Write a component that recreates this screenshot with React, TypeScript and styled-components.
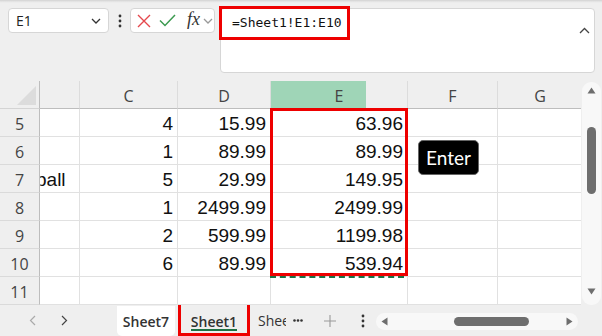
import React from 'react';
import styled, { createGlobalStyle } from 'styled-components';

const GlobalStyle = createGlobalStyle`
  html, body {
    margin: 0;
    padding: 0;
    background: #efefef;
  }
  #root {
    width: 602px;
    height: 336px;
    overflow: hidden;
  }
`;

const Window = styled.div`
  width: 602px;
  height: 336px;
  display: flex;
  flex-direction: column;
  background: #efefef;
  font-family: "Open Sans", "Noto Sans", sans-serif;
  overflow: hidden;
`;

const Toolbar = styled.div`
  height: 81px;
  box-sizing: border-box;
  display: flex;
  align-items: flex-start;
  padding: 8px 7px 0 8px;
  background: linear-gradient(#d2d2d2 0, #dedede 1px, #e9e9e9 2px, #efefef 3px);
`;

const NameBox = styled.div`
  width: 101px;
  height: 25px;
  box-sizing: border-box;
  display: flex;
  align-items: center;
  justify-content: space-between;
  padding: 0 7px 0 7px;
  background: #fff;
  border: 1px solid #d6d6d6;
  border-radius: 4px;
  font-size: 14px;
  color: #222;
`;

const Kebab = styled.div`
  width: 21px;
  height: 25px;
  display: flex;
  align-items: center;
  justify-content: center;
`;

const FuncBox = styled.div`
  width: 85px;
  height: 25px;
  box-sizing: border-box;
  display: flex;
  align-items: center;
  padding-left: 6px;
  background: #fff;
  border: 1px solid #d6d6d6;
  border-radius: 4px;
`;

const Fx = styled.span`
  font-family: "Liberation Serif", serif;
  font-style: italic;
  font-size: 18px;
  color: #333;
  margin: -2px 3px 0 11px;
`;

const FormulaBar = styled.div`
  width: 375px;
  height: 65px;
  margin-left: 5px;
  box-sizing: border-box;
  display: flex;
  justify-content: space-between;
  align-items: flex-start;
  background: #fff;
  border: 1px solid #d6d6d6;
  border-radius: 4px;
`;

const FormulaText = styled.span`
  display: inline-block;
  margin: -3px 0 0 -2px;
  padding: 0 5px 0 10px;
  height: 28px;
  line-height: 27px;
  border: 3px solid #ee0000;
  font-family: "DejaVu Sans Mono", "Liberation Mono", monospace;
  font-size: 13px;
  color: #111;
`;

const Caret = styled.div`
  padding: 8px 4px 0 0;
`;

const SheetArea = styled.div`
  height: 224px;
  display: flex;
`;

const Grid = styled.div`
  position: relative;
  width: 583px;
  display: grid;
  grid-template-columns: 40px 40px 98px 93px 137px 90px 85px;
  grid-auto-rows: 28px;
  background: #fff;
  overflow: hidden;
`;

const Corner = styled.div`
  background: #efefef;
  border-right: 1px solid #bdbdbd;
  border-bottom: 1px solid #d4d4d4;
  display: flex;
  align-items: flex-end;
  justify-content: flex-end;
  padding: 0 3px 3px 0;
`;

const ColHeader = styled.div<{ $split?: number }>`
  background: ${p =>
    p.$split ? `linear-gradient(to right, #9fd5b7 0 ${p.$split}px, #efefef ${p.$split}px)` : '#efefef'};
  border-right: 1px solid #dcdcdc;
  border-bottom: 1px solid #bdbdbd;
  display: flex;
  align-items: center;
  justify-content: center;
  font-size: 16px;
  color: #444;
  padding-top: 2px;
`;

const RowHeader = styled.div`
  background: #efefef;
  border-right: 1px solid #bdbdbd;
  border-bottom: 1px solid #dadada;
  display: flex;
  align-items: center;
  justify-content: center;
  font-size: 16px;
  color: #444;
  padding-top: 2px;
`;

const Cell = styled.div<{ $left?: boolean }>`
  border-right: 1px solid #e1e1e1;
  border-bottom: 1px solid #e1e1e1;
  display: flex;
  align-items: center;
  justify-content: ${p => (p.$left ? 'flex-start' : 'flex-end')};
  padding: 2px 4px 0 ${p => (p.$left ? '0' : '4px')};
  font-family: "Liberation Sans", Arial, sans-serif;
  font-size: 19px;
  color: #111;
  overflow: hidden;
  white-space: nowrap;
  text-indent: ${p => (p.$left ? '-4px' : '0')};
`;

const Selection = styled.div`
  position: absolute;
  left: 270px;
  top: 27px;
  width: 138px;
  height: 168px;
  box-sizing: border-box;
  border: 3px solid #ee0000;
`;

const CopyMarquee = styled.div`
  position: absolute;
  left: 270px;
  top: 195px;
  width: 134px;
  border-top: 2px dashed #1e7145;
`;

const EnterKey = styled.div`
  position: absolute;
  left: 418px;
  top: 59px;
  width: 61px;
  height: 35px;
  box-sizing: border-box;
  display: flex;
  align-items: center;
  justify-content: center;
  background: #000;
  border: 1px solid #666;
  border-radius: 5px;
  font-family: Lato, "DejaVu Sans", sans-serif;
  font-size: 19px;
  color: #fff;
  padding-bottom: 1px;
`;

const VScroll = styled.div`
  width: 19px;
  display: flex;
  padding: 1px 1px 0 1px;
`;

const VTrack = styled.div`
  flex: 1;
  display: flex;
  flex-direction: column;
  align-items: center;
  background: #f8f8f8;
  border-radius: 9px;
  padding-top: 5px;
`;

const VThumb = styled.div`
  width: 9px;
  height: 67px;
  margin-top: 33px;
  border-radius: 5px;
  background: #6e6e6e;
`;

const DownArrow = styled.div`
  margin-top: auto;
  margin-bottom: 5px;
`;

const TabBar = styled.div`
  height: 31px;
  display: flex;
  align-items: stretch;
  background: #efefef;
`;

const Nav = styled.div`
  width: 117px;
  display: flex;
  align-items: center;
  padding-left: 29px;
  box-sizing: border-box;
  gap: 25px;
`;

const Tab = styled.div<{ $active?: boolean }>`
  display: flex;
  align-items: center;
  justify-content: center;
  box-sizing: border-box;
  font-size: 14px;
  font-weight: 600;
  color: #333;
  background: ${p => (p.$active ? 'transparent' : '#fff')};
  border-radius: 0 0 5px 5px;
  margin-top: 1px;
`;

const ActiveFrame = styled.div`
  width: 72px;
  margin: -3px 0 0 3px;
  box-sizing: border-box;
  border: 3px solid #ee0000;
  display: flex;
  justify-content: center;
`;

const ActiveLabel = styled.span`
  position: relative;
  padding-top: 7px;
  font-size: 14px;
  font-weight: 600;
  color: #333;
  &::after {
    content: '';
    position: absolute;
    left: 0;
    right: 0;
    bottom: 2px;
    height: 2px;
    background: #1e7145;
  }
`;

const PartialTab = styled.div`
  width: 28px;
  margin-left: 8px;
  overflow: hidden;
  white-space: nowrap;
  display: flex;
  align-items: center;
  font-size: 14px;
  color: #333;
`;

const BarIcon = styled.div<{ $w: number }>`
  width: ${p => p.$w}px;
  display: flex;
  align-items: center;
  justify-content: center;
`;

const HScroll = styled.div`
  width: 202px;
  height: 17px;
  margin-top: 8px;
  display: flex;
  align-items: center;
  justify-content: space-between;
  padding: 0 5px;
  box-sizing: border-box;
  background: #f8f8f8;
  border-radius: 9px;
`;

const HThumb = styled.div`
  width: 75px;
  height: 9px;
  margin-left: 66px;
  margin-right: auto;
  border-radius: 5px;
  background: #6e6e6e;
`;

const Chevron = ({ color = '#333' }: { color?: string }) => (
  <svg width="10" height="6" viewBox="0 0 10 6">
    <path d="M1 1 L5 5 L9 1" fill="none" stroke={color} strokeWidth="1.3" />
  </svg>
);

const VDots = ({ color = '#333' }: { color?: string }) => (
  <svg width="4" height="14" viewBox="0 0 4 14">
    <circle cx="2" cy="2" r="1.4" fill={color} />
    <circle cx="2" cy="7" r="1.4" fill={color} />
    <circle cx="2" cy="12" r="1.4" fill={color} />
  </svg>
);

const cols = ['', 'C', 'D', 'E', 'F', 'G'];

const rows: { n: number; b?: string; c?: string; d?: string; e?: string }[] = [
  { n: 5, c: '4', d: '15.99', e: '63.96' },
  { n: 6, c: '1', d: '89.99', e: '89.99' },
  { n: 7, b: 'ball', c: '5', d: '29.99', e: '149.95' },
  { n: 8, c: '1', d: '2499.99', e: '2499.99' },
  { n: 9, c: '2', d: '599.99', e: '1199.98' },
  { n: 10, c: '6', d: '89.99', e: '539.94' },
  { n: 11 },
];

function App() {
  return (
    <>
      <GlobalStyle />
      <Window>
        <Toolbar>
          <NameBox>
            <span>E1</span>
            <Chevron />
          </NameBox>
          <Kebab>
            <VDots />
          </Kebab>
          <FuncBox>
            <svg width="14" height="14" viewBox="0 0 14 14">
              <path d="M1 1 L13 13 M13 1 L1 13" stroke="#e5484d" strokeWidth="1.4" />
            </svg>
            <svg width="17" height="13" viewBox="0 0 17 13" style={{ marginLeft: 8 }}>
              <path d="M1 6.5 L6 11.5 L16 1" fill="none" stroke="#3c9a50" strokeWidth="1.5" />
            </svg>
            <Fx>fx</Fx>
            <Chevron color="#999" />
          </FuncBox>
          <FormulaBar>
            <FormulaText>=Sheet1!E1:E10</FormulaText>
            <Caret>
              <svg width="11" height="7" viewBox="0 0 11 7">
                <path d="M1 6 L5.5 1.5 L10 6" fill="none" stroke="#444" strokeWidth="1.3" />
              </svg>
            </Caret>
          </FormulaBar>
        </Toolbar>

        <SheetArea>
          <Grid>
            <Corner>
              <svg width="19" height="19" viewBox="0 0 19 19">
                <path d="M19 0 L19 19 L0 19 Z" fill="#dcdcdc" />
              </svg>
            </Corner>
            {cols.map((c, i) => (
              <ColHeader key={i} $split={c === 'E' ? 95 : undefined}>
                {c}
              </ColHeader>
            ))}
            {rows.map(r => (
              <React.Fragment key={r.n}>
                <RowHeader>{r.n}</RowHeader>
                <Cell $left>{r.b ?? ''}</Cell>
                <Cell>{r.c ?? ''}</Cell>
                <Cell>{r.d ?? ''}</Cell>
                <Cell>{r.e ?? ''}</Cell>
                <Cell />
                <Cell />
              </React.Fragment>
            ))}
            <CopyMarquee />
            <Selection />
            <EnterKey>Enter</EnterKey>
          </Grid>
          <VScroll>
            <VTrack>
              <svg width="9" height="7" viewBox="0 0 9 7">
                <path d="M4.5 0.5 L8.5 6.5 L0.5 6.5 Z" fill="#6e6e6e" />
              </svg>
              <VThumb />
              <DownArrow>
                <svg width="9" height="7" viewBox="0 0 9 7">
                  <path d="M0.5 0.5 L8.5 0.5 L4.5 6.5 Z" fill="#6e6e6e" />
                </svg>
              </DownArrow>
            </VTrack>
          </VScroll>
        </SheetArea>

        <TabBar>
          <Nav>
            <svg width="7" height="11" viewBox="0 0 7 11">
              <path d="M6 1 L1.5 5.5 L6 10" fill="none" stroke="#aaa" strokeWidth="1.2" />
            </svg>
            <svg width="7" height="11" viewBox="0 0 7 11">
              <path d="M1 1 L5.5 5.5 L1 10" fill="none" stroke="#444" strokeWidth="1.2" />
            </svg>
          </Nav>
          <Tab style={{ width: 58 }}>Sheet7</Tab>
          <ActiveFrame>
            <ActiveLabel>Sheet1</ActiveLabel>
          </ActiveFrame>
          <PartialTab>Sheet2</PartialTab>
          <BarIcon $w={24}>
            <svg width="10" height="3" viewBox="0 0 10 3">
              <circle cx="1.5" cy="1.5" r="1.3" fill="#333" />
              <circle cx="5" cy="1.5" r="1.3" fill="#333" />
              <circle cx="8.5" cy="1.5" r="1.3" fill="#333" />
            </svg>
          </BarIcon>
          <BarIcon $w={40}>
            <svg width="12" height="12" viewBox="0 0 12 12">
              <path d="M6 0 L6 12 M0 6 L12 6" stroke="#999" strokeWidth="1.1" />
            </svg>
          </BarIcon>
          <BarIcon $w={26}>
            <VDots />
          </BarIcon>
          <HScroll>
            <svg width="7" height="9" viewBox="0 0 7 9">
              <path d="M6.5 0.5 L6.5 8.5 L0.5 4.5 Z" fill="#6e6e6e" />
            </svg>
            <HThumb />
            <svg width="7" height="9" viewBox="0 0 7 9">
              <path d="M0.5 0.5 L6.5 4.5 L0.5 8.5 Z" fill="#6e6e6e" />
            </svg>
          </HScroll>
        </TabBar>
      </Window>
    </>
  );
}

export default App;
